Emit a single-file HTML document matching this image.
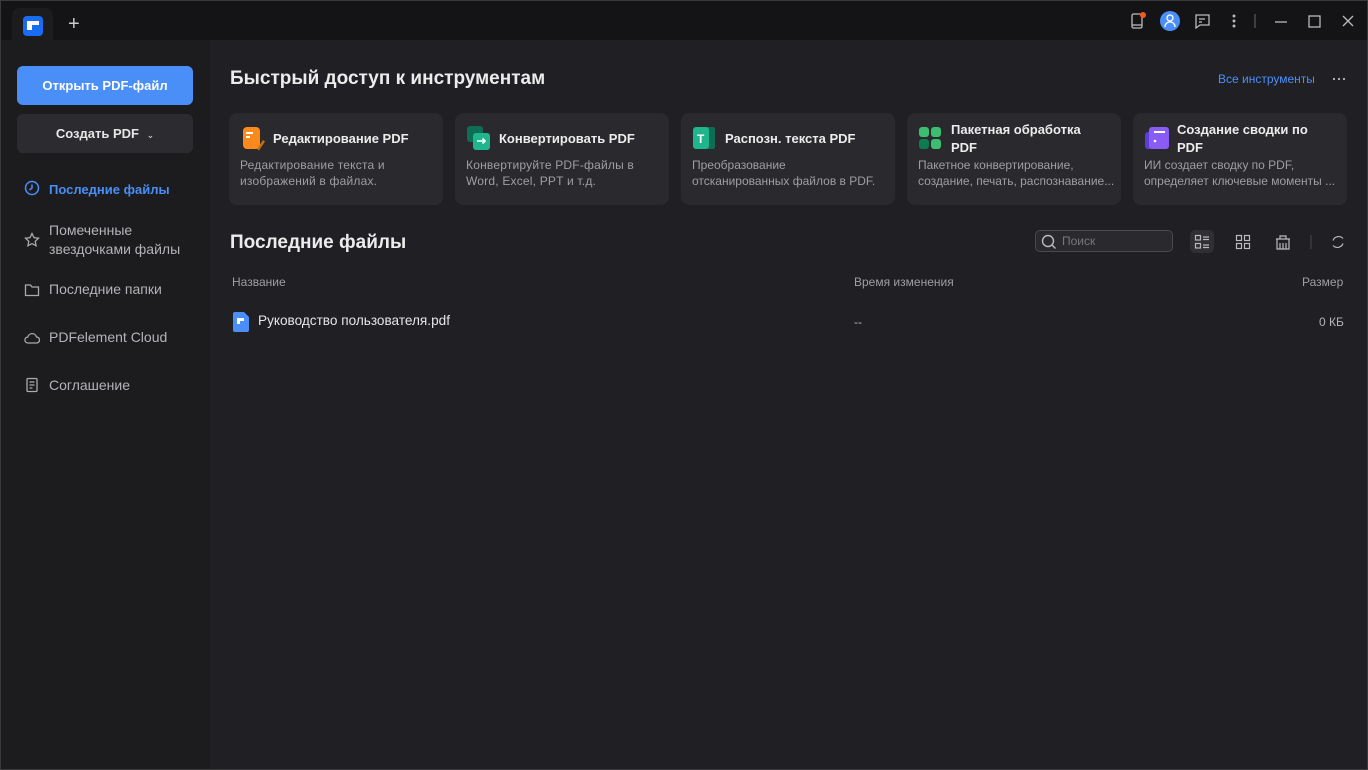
<!DOCTYPE html>
<html><head><meta charset="utf-8"><style>
*{margin:0;padding:0;box-sizing:border-box}
body{width:1368px;height:770px;overflow:hidden;background:#3a3a3c;font-family:"Liberation Sans","Noto Sans CJK SC",sans-serif;position:relative}
.win{position:absolute;left:1px;top:1px;right:1px;bottom:1px;background:#1f1f24}
.tb{position:absolute;left:0;top:0;right:0;height:39px;background:#141417}
.tab{position:absolute;left:11px;top:7px;width:41px;height:33px;background:#1c1c1e;border-radius:8px 8px 0 0}
.logo{position:absolute;left:22px;top:15px;width:20px;height:20px;background:#1a6cf5;border-radius:4px}
.side{position:absolute;left:0;top:39px;width:209px;bottom:0;background:#1c1c1e}
.abs{position:absolute}
.btn1{left:16px;top:26px;width:176px;height:39px;background:#4a8ff8;border-radius:6px;color:#fff;font-size:13px;font-weight:bold;text-align:center;line-height:39px}
.btn2{left:16px;top:74px;width:176px;height:39px;background:#2c2c30;border-radius:6px;color:#e6e6e6;font-size:13px;font-weight:bold;text-align:center;line-height:39px}
.nav{position:absolute;left:48px;color:#b4b4b8;font-size:14px;line-height:19px}
.ico{position:absolute;left:23px}
.card{position:absolute;top:112px;width:214px;height:92px;background:#2a2a2e;border-radius:8px}
.card .t{position:absolute;left:44px;top:17px;font-size:13px;font-weight:bold;color:#ececec;line-height:18px}
.card .d{position:absolute;left:11px;top:44px;width:196px;overflow:hidden;font-size:12px;color:#9e9ea3;line-height:16px;letter-spacing:.2px;white-space:nowrap}
.card .i{position:absolute;left:12px;top:13px}
.hdr{color:#9e9ea3;font-size:12px}
</style></head><body><div class="win">
<div class="tb"></div>
<div class="tab"></div>
<div class="logo"><div class="abs" style="left:4px;top:5px;width:12px;height:4px;background:#fff"></div><div class="abs" style="left:4px;top:9px;width:5px;height:5px;background:#fff"></div></div>
<div class="abs" style="left:67px;top:14px;color:#ccc;font-size:20px;line-height:18px">+</div>
<svg class="abs" style="left:1120px;top:10px" width="240" height="22" fill="none" stroke="#bbb" stroke-width="1.3">
<rect x="11" y="3" width="10" height="14" rx="1.5"/><line x1="11" y1="14" x2="21" y2="14"/><circle cx="22" cy="4" r="3" fill="#f25a1c" stroke="none"/>
<circle cx="49" cy="10" r="10" fill="#4a8ff8" stroke="none"/><circle cx="49" cy="7" r="3" stroke="#fff"/><path d="M44 16c0-3 2-5 5-5s5 2 5 5" stroke="#fff"/>
<path d="M75 4h13v10h-9l-4 3z"/><line x1="78" y1="8" x2="84" y2="8"/><line x1="78" y1="11" x2="81" y2="11"/>
<circle cx="113" cy="5" r=".8" fill="#bbb"/><circle cx="113" cy="10" r=".8" fill="#bbb"/><circle cx="113" cy="15" r=".8" fill="#bbb"/>
<line x1="134" y1="3" x2="134" y2="17" stroke="#555"/>
<line x1="154" y1="11" x2="166" y2="11"/><rect x="188" y="5" width="11" height="11"/><path d="M222 5l10 10M232 5l-10 10"/>
</svg>
<div class="side">
<div class="abs btn1">Открыть PDF-файл</div>
<div class="abs btn2">Создать PDF <span style="font-size:9px;font-weight:normal;margin-left:4px">&#8964;</span></div>
<svg class="ico" style="top:140px" width="16" height="16" fill="none" stroke="#4a8ff8" stroke-width="1.5"><circle cx="8" cy="8" r="6.5"/><path d="M8 4.5V8l-2.5 2"/></svg>
<div class="nav" style="top:140px;color:#4a8ff8;font-weight:bold;font-size:13px">Последние файлы</div>
<svg class="ico" style="top:192px" width="16" height="16" fill="none" stroke="#aaa" stroke-width="1.3"><path d="M8 1.5l2 4.2 4.5.5-3.3 3.1.9 4.5L8 11.6l-4.1 2.2.9-4.5L1.5 6.2 6 5.7z"/></svg>
<div class="nav" style="top:181px">Помеченные<br>звездочками файлы</div>
<svg class="ico" style="top:242px" width="16" height="16" fill="none" stroke="#aaa" stroke-width="1.3"><path d="M1.5 3h5l1.5 2h6.5v8.5h-13z"/></svg>
<div class="nav" style="top:240px">Последние папки</div>
<svg class="ico" style="top:290px" width="16" height="16" fill="none" stroke="#aaa" stroke-width="1.3"><path d="M4 13h8.5a3 3 0 0 0 0-6 4.5 4.5 0 0 0-8.7 0A3 3 0 0 0 4 13z"/></svg>
<div class="nav" style="top:288px">PDFelement Cloud</div>
<svg class="ico" style="top:337px" width="16" height="16" fill="none" stroke="#aaa" stroke-width="1.3"><rect x="3" y="1.5" width="10" height="13" rx="1"/><path d="M5.5 5h5M5.5 8h5M5.5 11h3"/></svg>
<div class="nav" style="top:336px">Соглашение</div>
</div>
<div class="abs" style="left:229px;top:67px;font-size:19px;font-weight:bold;color:#ececec">Быстрый доступ к инструментам</div>
<div class="abs" style="left:1217px;top:71px;font-size:12px;color:#4a8ff8">Все инструменты</div>
<svg class="abs" style="left:1331px;top:76px" width="16" height="4"><circle cx="2" cy="2" r="1.1" fill="#bbb"/><circle cx="7" cy="2" r="1.1" fill="#bbb"/><circle cx="12" cy="2" r="1.1" fill="#bbb"/></svg>
<div class="card" style="left:228px"><svg class="i" width="26" height="26"><rect x="2" y="1" width="17" height="22" rx="4" fill="#fb8a1c"/><rect x="5" y="6" width="7" height="2" fill="#fff"/><rect x="5" y="10" width="4" height="2" fill="#fff"/><path d="M16 23l6-9 2 1.5-6 9z" fill="#c56d12"/></svg><div class="t">Редактирование PDF</div><div class="d">Редактирование текста и<br>изображений в файлах.</div></div>
<div class="card" style="left:454px"><svg class="i" width="26" height="26"><rect x="0" y="0" width="16" height="16" rx="3" fill="#0d6e55"/><rect x="6" y="7" width="17" height="17" rx="3" fill="#1fb58d"/><path d="M10 15h8m-2.5-2.5L18 15l-2.5 2.5" stroke="#fff" stroke-width="1.6" fill="none"/></svg><div class="t">Конвертировать PDF</div><div class="d">Конвертируйте PDF-файлы в<br>Word, Excel, PPT и т.д.</div></div>
<div class="card" style="left:680px"><svg class="i" width="26" height="26"><rect x="13" y="1" width="9" height="22" rx="2" fill="#0d6e55"/><rect x="0" y="1" width="16" height="22" rx="3" fill="#1fb58d"/><text x="4" y="17" font-size="12" font-weight="bold" fill="#fff" font-family="Liberation Sans">T</text></svg><div class="t">Распозн. текста PDF</div><div class="d" style="letter-spacing:0">Преобразование<br>отсканированных файлов в PDF.</div></div>
<div class="card" style="left:906px"><svg class="i" width="26" height="26"><rect x="0" y="1" width="10" height="10" rx="3" fill="#3dbd6f"/><rect x="12" y="1" width="10" height="10" rx="3" fill="#3dbd6f"/><rect x="0" y="13" width="10" height="10" rx="3" fill="#0d7a4f"/><rect x="12" y="13" width="10" height="10" rx="3" fill="#3dbd6f"/></svg><div class="t" style="top:8px">Пакетная обработка<br>PDF</div><div class="d" style="letter-spacing:0">Пакетное конвертирование,<br>создание, печать, распознавание...</div></div>
<div class="card" style="left:1132px"><svg class="i" width="26" height="26"><rect x="0" y="6" width="14" height="17" rx="3" fill="#5b3fd8"/><rect x="4" y="1" width="20" height="22" rx="3" fill="#8a5cf6"/><rect x="9" y="5" width="11" height="2" fill="#fff"/><circle cx="10" cy="15" r="1.3" fill="#fff"/></svg><div class="t" style="top:8px">Создание сводки по<br>PDF</div><div class="d" style="letter-spacing:0">ИИ создает сводку по PDF,<br>определяет ключевые моменты ...</div></div>
<div class="abs" style="left:229px;top:231px;font-size:19px;font-weight:bold;color:#ececec">Последние файлы</div>
<div class="abs" style="left:1034px;top:229px;width:138px;height:22px;border:1px solid #4a4a4e;border-radius:5px;background:#2a2a2e"></div>
<svg class="abs" style="left:1040px;top:233px" width="16" height="16" fill="none" stroke="#bbb" stroke-width="1.4"><circle cx="7" cy="7" r="5.5"/><path d="M11 11l3.5 3.5"/></svg>
<div class="abs" style="left:1061px;top:233px;font-size:12px;color:#77777c">Поиск</div>
<div class="abs" style="left:1189px;top:229px;width:24px;height:23px;background:#2f2f34;border-radius:5px"></div>
<svg class="abs" style="left:1193px;top:233px" width="160" height="16" fill="none" stroke="#bbb" stroke-width="1.2"><rect x="1.5" y="1.5" width="5" height="4.5"/><rect x="1.5" y="9.5" width="5" height="4.5"/><path d="M9 3h6M9 5.5h6M9 11h6M9 13.5h6"/>
<rect x="42.5" y="1.5" width="5" height="5"/><rect x="50.5" y="1.5" width="5" height="5"/><rect x="42.5" y="9.5" width="5" height="5"/><rect x="50.5" y="9.5" width="5" height="5"/>
<path d="M83 5h12v10H83zM82 5h14M86 5V2h6v3M86 9v6M89 9v6M92 9v6"/>
<line x1="117" y1="1" x2="117" y2="15" stroke="#444"/>
<path d="M149 4.5A6 6 0 0 0 139 6.5M139 11.5A6 6 0 0 0 149 9.5"/>
</svg>
<div class="abs hdr" style="left:231px;top:274px">Название</div>
<div class="abs hdr" style="left:853px;top:274px">Время изменения</div>
<div class="abs hdr" style="left:1301px;top:274px">Размер</div>
<svg class="abs" style="left:232px;top:311px" width="16" height="20"><path d="M2 0h9l5 5v13a2 2 0 0 1-2 2H2a2 2 0 0 1-2-2V2a2 2 0 0 1 2-2z" fill="#4a8ff8"/><rect x="4" y="6" width="7" height="3" fill="#fff"/><rect x="4" y="9" width="3" height="3" fill="#fff"/></svg>
<div class="abs" style="left:257px;top:312px;font-size:13.6px;color:#e6e6e6">Руководство пользователя.pdf</div>
<div class="abs" style="left:853px;top:314px;font-size:12px;color:#b4b4b8">--</div>
<div class="abs" style="left:1318px;top:314px;font-size:12px;color:#b4b4b8">0 КБ</div>
</div></body></html>
